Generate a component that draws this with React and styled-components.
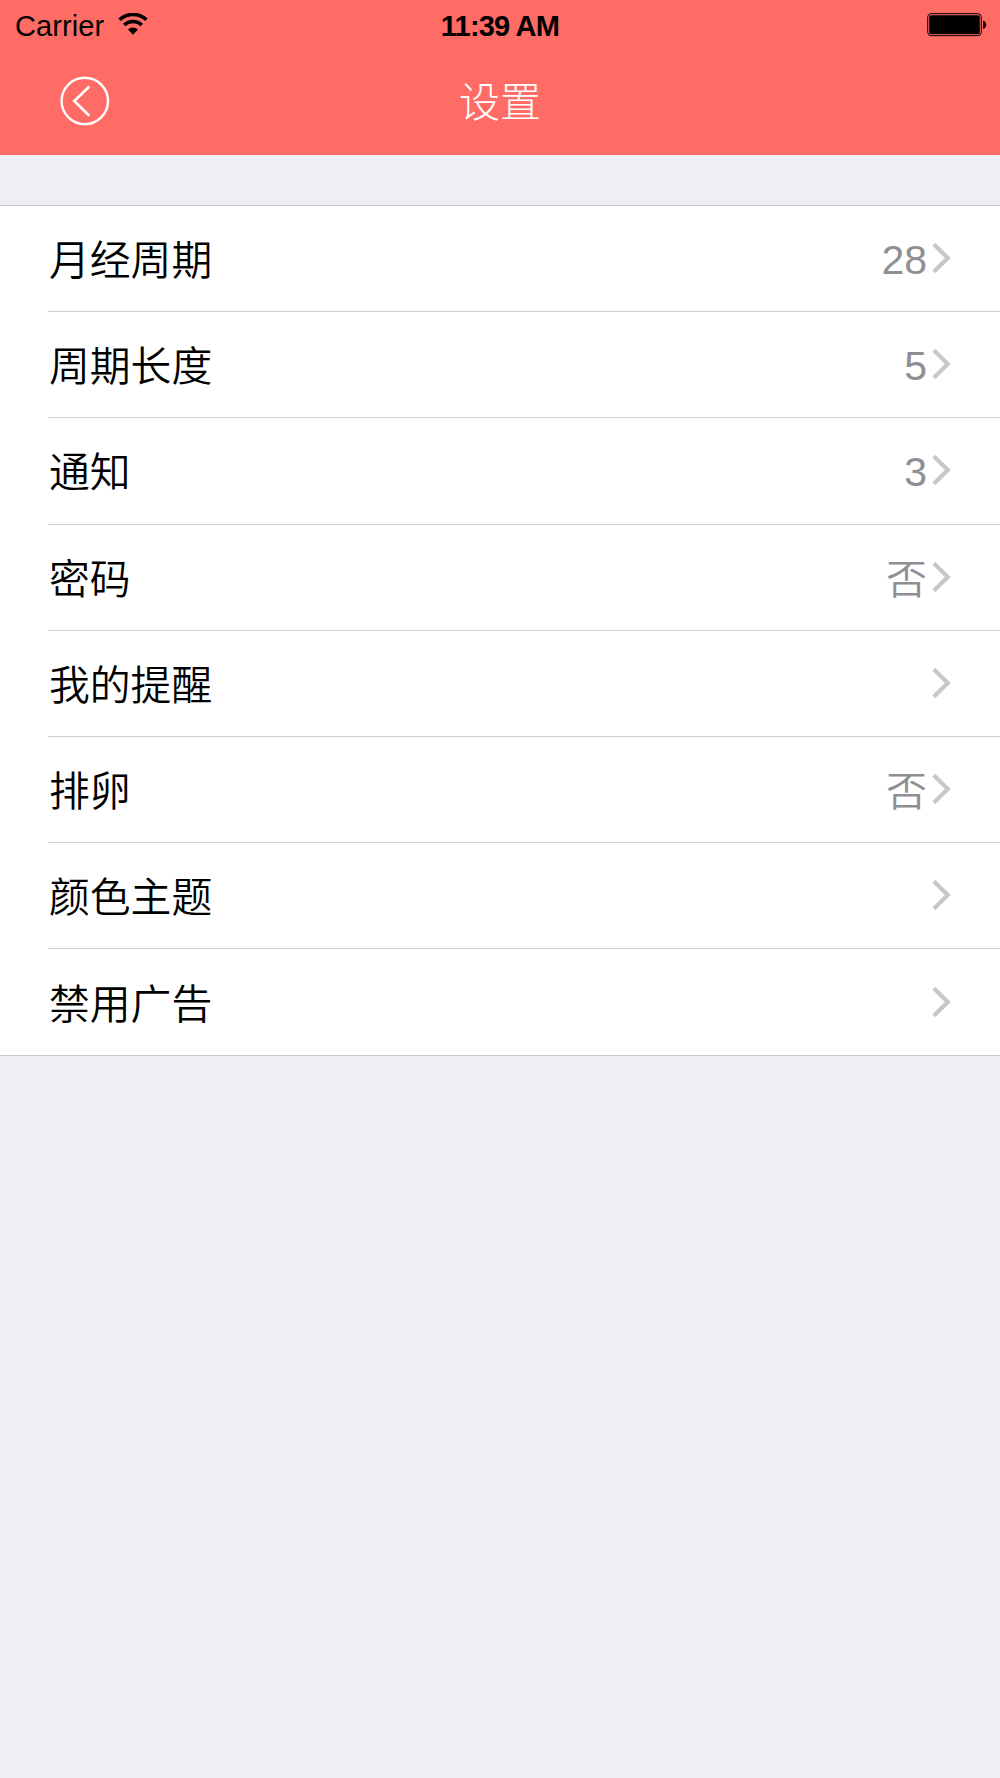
import React from "react";
import styled, { createGlobalStyle } from "styled-components";

const GlobalStyle = createGlobalStyle`
  body {
    margin: 0;
    background: #efeef4;
  }
`;

const Screen = styled.div`
  min-height: 1778px;
  background: #efeef4;
  font-family: "Liberation Sans", "Noto Sans CJK SC", sans-serif;
`;

const Header = styled.header`
  height: 154.6px;
  background: #ff6b65;
`;

const StatusBar = styled.div`
  display: grid;
  grid-template-columns: 1fr auto 1fr;
  align-items: center;
  height: 48px;
  padding: 0 13px 0 15px;
  color: #000;
  font-size: 29px;
  line-height: 33px;
`;

const Carrier = styled.div`
  display: flex;
  align-items: center;
  gap: 14px;
  padding-top: 4px;
  letter-spacing: 0.1px;
`;

const Time = styled.div`
  padding-top: 4px;
  margin-right: 2px;
  font-weight: 700;
  letter-spacing: -0.8px;
`;

const BatteryIcon = styled.svg`
  justify-self: end;
  margin-top: 2px;
`;

const WifiIcon = styled.svg`
  margin-top: -4px;
`;

const NavBar = styled.div`
  display: grid;
  grid-template-columns: 1fr auto 1fr;
  align-items: center;
  height: 106px;
  padding-left: 60px;
  padding-right: 60px;
`;

const BackButton = styled.button`
  display: flex;
  width: 50px;
  height: 50px;
  padding: 0;
  border: 0;
  background: none;
`;

const Title = styled.h1`
  margin: 0;
  padding-top: 4px;
  color: #fff;
  font-size: 41px;
  font-weight: 300;
  line-height: 60px;
`;

const List = styled.ul`
  margin: 50.4px 0 0;
  padding: 0;
  list-style: none;
  background: #fff;
  border-top: 1px solid #c8c7cc;
  border-bottom: 1px solid #c8c7cc;
`;

const Row = styled.li`
  display: flex;
  align-items: center;
  box-sizing: border-box;
  height: 106.2px;
  margin-left: 48px;
  padding-right: 48px;
  border-bottom: 1px solid #d0d0d3;

  &:last-child {
    height: 105.8px;
    border-bottom: 0;
  }
`;

const Label = styled.span`
  flex: 1;
  padding-top: 5px;
  padding-left: 1px;
  color: #000;
  font-size: 40.8px;
  font-weight: 350;
  line-height: 60px;
`;

const Value = styled.span`
  margin-right: 5px;
  padding-top: ${(props) => (props.$numeric ? "2px" : "5px")};
  color: #8e8e93;
  font-size: 41px;
  font-weight: 350;
  line-height: 60px;
`;

const Chevron = styled.svg`
  flex: none;
  margin-top: -1px;
`;

const items = [
  { label: "月经周期", value: 28 },
  { label: "周期长度", value: 5 },
  { label: "通知", value: 3 },
  { label: "密码", value: "否" },
  { label: "我的提醒" },
  { label: "排卵", value: "否" },
  { label: "颜色主题" },
  { label: "禁用广告" },
];

const App = () => {
  return (
    <Screen>
      <GlobalStyle />
      <Header>
        <StatusBar>
          <Carrier>
            Carrier
            <WifiIcon width="30" height="22" viewBox="0 0 30 22">
              <path
                d="M1.6 6.8a19.5 19.5 0 0 1 26.8 0M6.2 12a12.8 12.8 0 0 1 17.6 0"
                fill="none"
                stroke="#000"
                strokeWidth="3.6"
              />
              <path d="M10 16.4a7.2 7.2 0 0 1 10 0L15 21.8z" />
            </WifiIcon>
          </Carrier>
          <Time>11:39 AM</Time>
          <BatteryIcon width="60" height="24" viewBox="0 0 60 24">
            <rect
              x="0.7"
              y="0.7"
              width="53.6"
              height="22"
              rx="3.5"
              fill="none"
              stroke="#000"
              strokeWidth="1"
            />
            <rect x="2.2" y="2.2" width="50.6" height="19" rx="2" />
            <path d="M56 7.5q3.2 1 3.2 4.3T56 16z" />
          </BatteryIcon>
        </StatusBar>
        <NavBar>
          <BackButton aria-label="返回">
            <svg width="50" height="50" viewBox="0 0 50 50" fill="none" stroke="#fff">
              <circle cx="24.8" cy="25" r="23.2" strokeWidth="2.4" />
              <path d="M29.3 10.5 14.3 25l15 14.8" strokeWidth="2.6" />
            </svg>
          </BackButton>
          <Title>设置</Title>
        </NavBar>
      </Header>
      <List>
        {items.map((item) => (
          <Row key={item.label}>
            <Label>{item.label}</Label>
            {item.value && (
              <Value $numeric={typeof item.value === "number"}>
                {item.value}
              </Value>
            )}
            <Chevron width="20" height="32" viewBox="0 0 20 32">
              <path
                d="M1.8 2.2 15.8 16l-14 13.8"
                fill="none"
                stroke="#c7c7cc"
                strokeWidth="4.2"
              />
            </Chevron>
          </Row>
        ))}
      </List>
    </Screen>
  );
};

export default App;
